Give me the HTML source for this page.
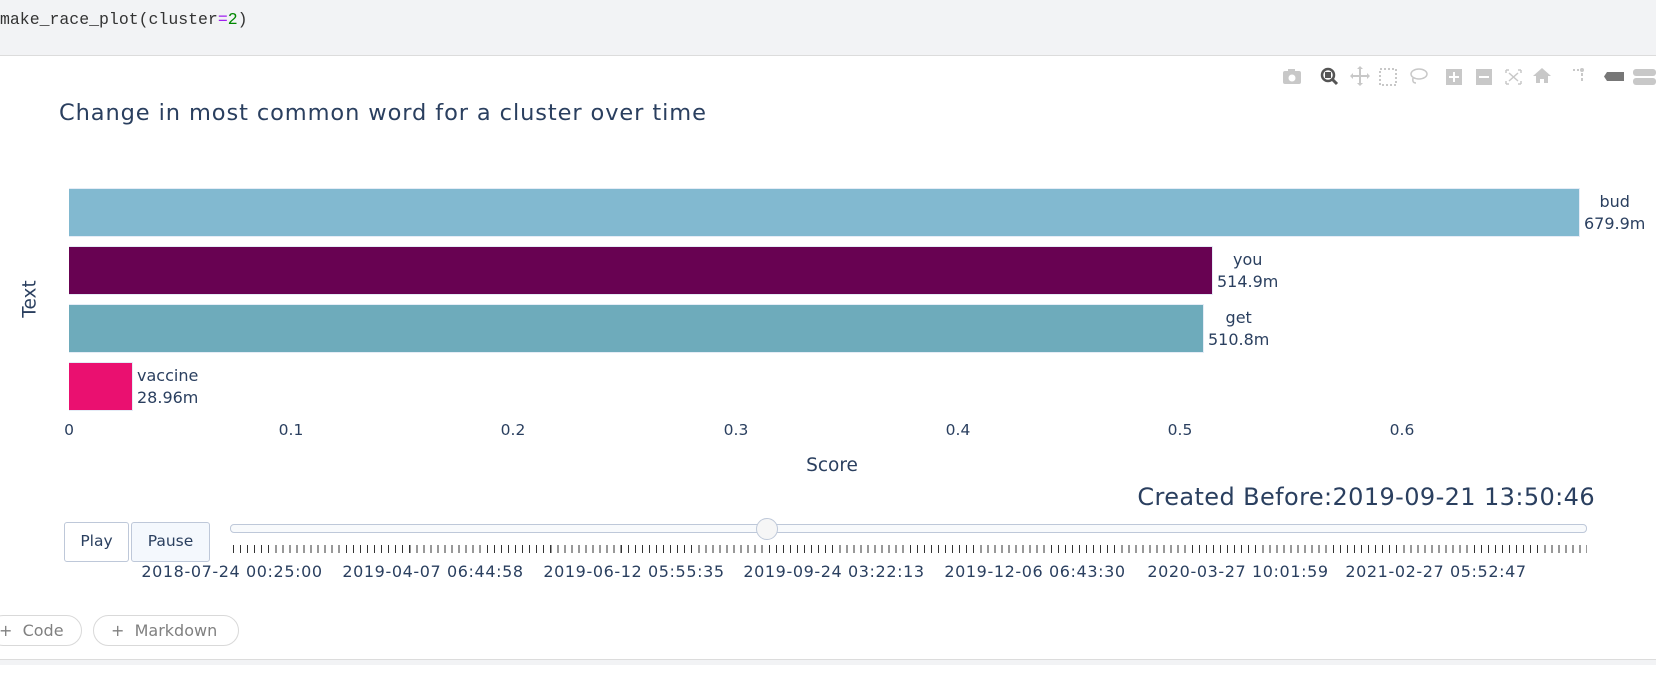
<!DOCTYPE html>
<html><head><meta charset="utf-8"><style>
*{margin:0;padding:0;box-sizing:border-box}
body{width:1656px;height:695px;background:#fff;position:relative;overflow:hidden;font-family:"DejaVu Sans","Liberation Sans",sans-serif;color:#2a3f5f}
.a{position:absolute;white-space:nowrap}
.bar{position:absolute;border:1px solid #e5ecf6;border-left:none}
.lbl{position:absolute;text-align:center;font-size:16px;line-height:22px;color:#2a3f5f}
.tick{position:absolute;top:421px;font-size:15.5px;transform:translateX(-50%)}
.dl{position:absolute;top:562px;font-size:16px;letter-spacing:0.6px;transform:translateX(-50%)}
.btn{position:absolute;border:1px solid #bec8d9;border-radius:3px;font-size:15.5px;text-align:center;line-height:36px}
.cb{position:absolute;top:615px;height:31px;border:1px solid #d9d9d9;border-radius:16px;font-size:16px;color:#808080;line-height:29px}
</style></head><body>
<div class="a" style="left:0;top:0;width:1656px;height:56px;background:#f2f3f5;border-bottom:1px solid #dcdcdc"></div>
<div class="a" style="left:0;top:10px;font-family:'Liberation Mono',monospace;font-size:16.5px;color:#333">make_race_plot(cluster<span style="color:#a020f0">=</span><span style="color:#080">2</span>)</div>

<svg class="a" style="left:1280px;top:66px" width="376" height="24" viewBox="1280 66 376 24">
<g fill="#c8c8c8">
<rect x="1283" y="71" width="18" height="13" rx="2"/><rect x="1288" y="69" width="7" height="3"/><circle cx="1292" cy="78" r="3.5" fill="#fff"/>
<rect x="1352" y="75" width="16" height="2"/><rect x="1359" y="68" width="2" height="16"/><path d="M1360 66l3 3h-6zM1360 86l3-3h-6zM1350 76l3-3v6zM1370 76l-3-3v6z"/>
<rect x="1446" y="69" width="16" height="16"/><rect x="1476" y="69" width="16" height="16"/>
<path d="M1542 68l9 8h-3v7h-4v-4h-4v4h-4v-7h-3z"/>
<circle cx="1582" cy="70" r="2"/><rect x="1581" y="73" width="2" height="3"/><rect x="1581" y="78" width="2" height="3"/><rect x="1573" y="69" width="2" height="2"/><rect x="1577" y="69" width="2" height="2"/>
<rect x="1633" y="69" width="23" height="7" rx="3"/><rect x="1633" y="78" width="23" height="7" rx="3"/>
</g>
<g fill="#fff"><rect x="1449" y="76" width="10" height="2"/><rect x="1453" y="72" width="2" height="10"/><rect x="1479" y="76" width="10" height="2"/></g>
<path d="M1607 72h17v9h-17l-3-4.5z" fill="#777"/>
<circle cx="1328" cy="75" r="6" fill="none" stroke="#555" stroke-width="2.5"/><rect x="1325" y="72" width="6" height="6" fill="#555"/><path d="M1332 79l5 5" stroke="#555" stroke-width="3"/>
<rect x="1380" y="69" width="16" height="16" fill="none" stroke="#c8c8c8" stroke-width="2" stroke-dasharray="2 2"/>
<ellipse cx="1419" cy="74" rx="8" ry="5" fill="none" stroke="#c8c8c8" stroke-width="1.5"/><path d="M1413 78q-1 5 3 5" fill="none" stroke="#c8c8c8" stroke-width="1.5"/>
<path d="M1506 70h3M1506 70v3M1521 70h-3M1521 70v3M1506 84h3M1506 84v-3M1521 84h-3M1521 84v-3M1509 73l9 8M1518 73l-9 8" stroke="#c8c8c8" stroke-width="1.5" fill="none"/>
</svg>

<div class="a" style="left:59px;top:100px;font-size:22.5px;letter-spacing:0.9px;color:#2a3f5f">Change in most common word for a cluster over time</div>

<div class="bar" style="left:69px;top:188px;width:1511px;height:49px;background:#82b9d0"></div>
<div class="bar" style="left:69px;top:246px;width:1144px;height:49px;background:#680252"></div>
<div class="bar" style="left:69px;top:304px;width:1135px;height:49px;background:#6eabbb"></div>
<div class="bar" style="left:69px;top:362px;width:64px;height:49px;background:#ea1070"></div>
<div class="lbl" style="left:1584px;top:191px">bud<br>679.9m</div>
<div class="lbl" style="left:1217px;top:249px">you<br>514.9m</div>
<div class="lbl" style="left:1208px;top:307px">get<br>510.8m</div>
<div class="lbl" style="left:137px;top:365px;text-align:left">vaccine<br>28.96m</div>

<div class="tick" style="left:69px">0</div>
<div class="tick" style="left:291px">0.1</div>
<div class="tick" style="left:513px">0.2</div>
<div class="tick" style="left:736px">0.3</div>
<div class="tick" style="left:958px">0.4</div>
<div class="tick" style="left:1180px">0.5</div>
<div class="tick" style="left:1402px">0.6</div>
<div class="a" style="left:832px;top:455px;font-size:18.5px;transform:translateX(-50%)">Score</div>
<div class="a" style="left:30px;top:299px;font-size:18.5px;transform:translate(-50%,-50%) rotate(-90deg)">Text</div>
<div class="a" style="right:61px;top:483px;font-size:24px;letter-spacing:0.4px">Created Before:2019-09-21 13:50:46</div>

<div class="btn" style="left:64px;top:522px;width:65px;height:40px;background:#fff">Play</div>
<div class="btn" style="left:131px;top:522px;width:79px;height:40px;background:#f4f8fd">Pause</div>
<div class="a" style="left:230px;top:524px;width:1357px;height:9px;border:1px solid #bec8d9;border-radius:4px;background:#f8fafc"></div>
<div class="a" style="left:756px;top:518px;width:22px;height:22px;border-radius:50%;border:1px solid #bec8d9;background:#f6f6f6"></div>
<div class="a" style="left:233px;top:545px;width:1354px;height:8px;background:repeating-linear-gradient(90deg,#333 0 1px,transparent 1px 7.05px)"></div>
<div class="dl" style="left:232px">2018-07-24 00:25:00</div>
<div class="dl" style="left:433px">2019-04-07 06:44:58</div>
<div class="dl" style="left:634px">2019-06-12 05:55:35</div>
<div class="dl" style="left:834px">2019-09-24 03:22:13</div>
<div class="dl" style="left:1035px">2019-12-06 06:43:30</div>
<div class="dl" style="left:1238px">2020-03-27 10:01:59</div>
<div class="dl" style="left:1436px">2021-02-27 05:52:47</div>

<div class="cb" style="left:-12px;width:94px;padding-left:10px">+&nbsp; Code</div>
<div class="cb" style="left:93px;width:146px;padding-left:17px">+&nbsp; Markdown</div>
<div class="a" style="left:0;top:659px;width:1656px;height:6px;background:#f2f3f5;border-top:1px solid #dcdcdc"></div>
</body></html>
